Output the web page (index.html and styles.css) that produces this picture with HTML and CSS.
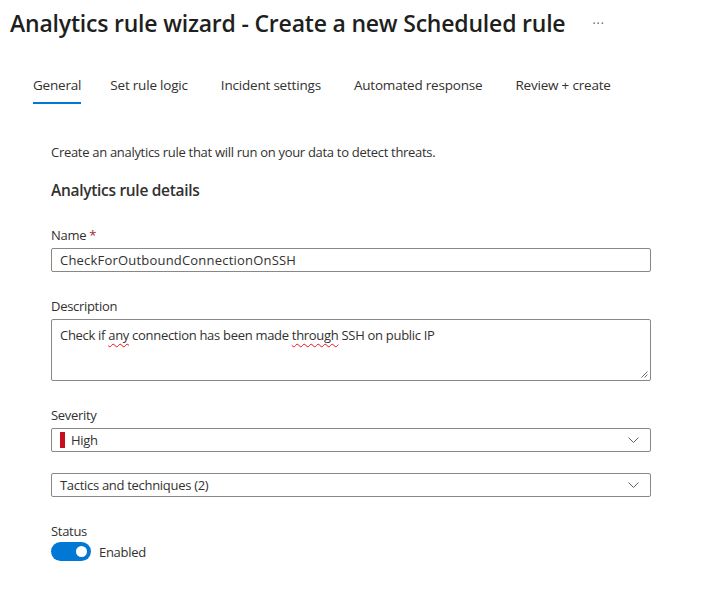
FILE: index.html
```html
<!DOCTYPE html>
<html>
<head>
<meta charset="utf-8">
<link rel="stylesheet" href="styles.css">
</head>
<body>
<div class="header">
  <h1 class="title">Analytics rule wizard - Create a new Scheduled rule</h1>
  <span class="more">···</span>
</div>
<nav class="tabs">
  <span class="tab active">General</span>
  <span class="tab">Set rule logic</span>
  <span class="tab">Incident settings</span>
  <span class="tab">Automated response</span>
  <span class="tab">Review + create</span>
</nav>
<main class="content">
  <p class="intro">Create an analytics rule that will run on your data to detect threats.</p>
  <h2 class="section">Analytics rule details</h2>

  <div class="field">
    <label class="label">Name <span class="req">*</span></label>
    <div class="input name-input">CheckForOutboundConnectionOnSSH</div>
  </div>

  <div class="field">
    <label class="label">Description</label>
    <div class="textarea">Check if <span class="spell">any</span> connection has been made <span class="spell">through</span> SSH on public IP
      <svg class="grip" width="7" height="7" viewBox="0 0 7 7"><path d="M6.5 0.5 L0.5 6.5 M6.5 3.5 L3.5 6.5" stroke="#605e5c" stroke-width="0.9"/></svg>
    </div>
  </div>

  <div class="field">
    <label class="label">Severity</label>
    <div class="select"><span class="sev"></span><span class="sel-text">High</span>
      <svg class="chev" width="11" height="7" viewBox="0 0 11 7"><path d="M0.5 0.5 L5.5 5.5 L10.5 0.5" fill="none" stroke="#605e5c" stroke-width="1"/></svg>
    </div>
  </div>

  <div class="field tight">
    <div class="select"><span class="sel-text">Tactics and techniques (2)</span>
      <svg class="chev" width="11" height="7" viewBox="0 0 11 7"><path d="M0.5 0.5 L5.5 5.5 L10.5 0.5" fill="none" stroke="#605e5c" stroke-width="1"/></svg>
    </div>
  </div>

  <div class="field status">
    <label class="label">Status</label>
    <div class="toggle-row">
      <span class="toggle"><span class="knob"></span></span>
      <span class="toggle-text">Enabled</span>
    </div>
  </div>
</main>
</body>
</html>
```
FILE: styles.css
```css
html, body {
  margin: 0;
  padding: 0;
  background: #fff;
}
body {
  font-family: "Segoe UI", "Open Sans", "Noto Sans", sans-serif;
  color: #323130;
  font-size: 13px;
}
.header {
  display: flex;
  align-items: center;
  padding: 6px 0 0 10px;
  height: 34px;
}
.title {
  margin: 0;
  font-size: 23px;
  font-weight: 600;
  letter-spacing: -0.2px;
  color: #201f1e;
  line-height: 32px;
}
.more {
  margin-left: 27px;
  color: #605e5c;
  font-size: 12px;
  letter-spacing: 1px;
}
.tabs {
  display: flex;
  padding: 35px 0 0 33px;
}
.tab {
  font-size: 13.5px;
  line-height: 20px;
  padding-bottom: 7px;
  color: #323130;
  letter-spacing: -0.2px;
  border-bottom: 2px solid transparent;
  margin-right: 33px;
}
.tab:first-child {
  margin-right: 29px;
}
.tab.active {
  border-bottom-color: #0078d4;
}
.content {
  padding: 25px 0 0 51px;
  width: 600px;
}
.intro {
  margin: 13px 0 0 0;
  line-height: 20px;
  letter-spacing: -0.3px;
}
.section {
  margin: 17px 0 0 0;
  font-size: 15.5px;
  font-weight: 600;
  line-height: 22px;
  letter-spacing: -0.3px;
}
.field {
  margin-top: 25px;
}
.field.tight {
  margin-top: 21px;
}
.label {
  display: block;
  line-height: 18px;
  margin-bottom: 4px;
  letter-spacing: -0.3px;
}
.req {
  color: #a4262c;
}
.input, .select {
  box-sizing: border-box;
  height: 24px;
  border: 1px solid #8a8886;
  border-radius: 2px;
  padding: 0 8px;
  line-height: 22px;
  letter-spacing: -0.3px;
  display: flex;
  align-items: center;
  position: relative;
}
.name-input {
  letter-spacing: 0.2px;
}
.textarea {
  box-sizing: border-box;
  height: 62px;
  border: 1px solid #8a8886;
  border-radius: 2px;
  padding: 6px 8px;
  line-height: 18px;
  letter-spacing: -0.3px;
  position: relative;
}
.spell {
  text-decoration: underline wavy #e81123;
  text-decoration-thickness: 1px;
  text-underline-offset: 3px;
}
.grip {
  position: absolute;
  right: 2px;
  bottom: 2px;
}
.sev {
  width: 5px;
  height: 16px;
  background: #c50f1f;
  margin-right: 6px;
}
.sel-text {
  flex: 1;
}
.chev {
  margin-right: 3px;
}
.status {
  margin-top: 25px;
}
.status .label {
  margin-bottom: 2px;
}
.toggle-row {
  display: flex;
  align-items: center;
  gap: 8px;
}
.toggle {
  box-sizing: border-box;
  width: 40px;
  height: 19px;
  border-radius: 10px;
  background: #0078d4;
  position: relative;
}
.knob {
  position: absolute;
  right: 4px;
  top: 4px;
  width: 11px;
  height: 11px;
  border-radius: 50%;
  background: #fff;
}
.toggle-text {
  letter-spacing: -0.3px;
}
```
